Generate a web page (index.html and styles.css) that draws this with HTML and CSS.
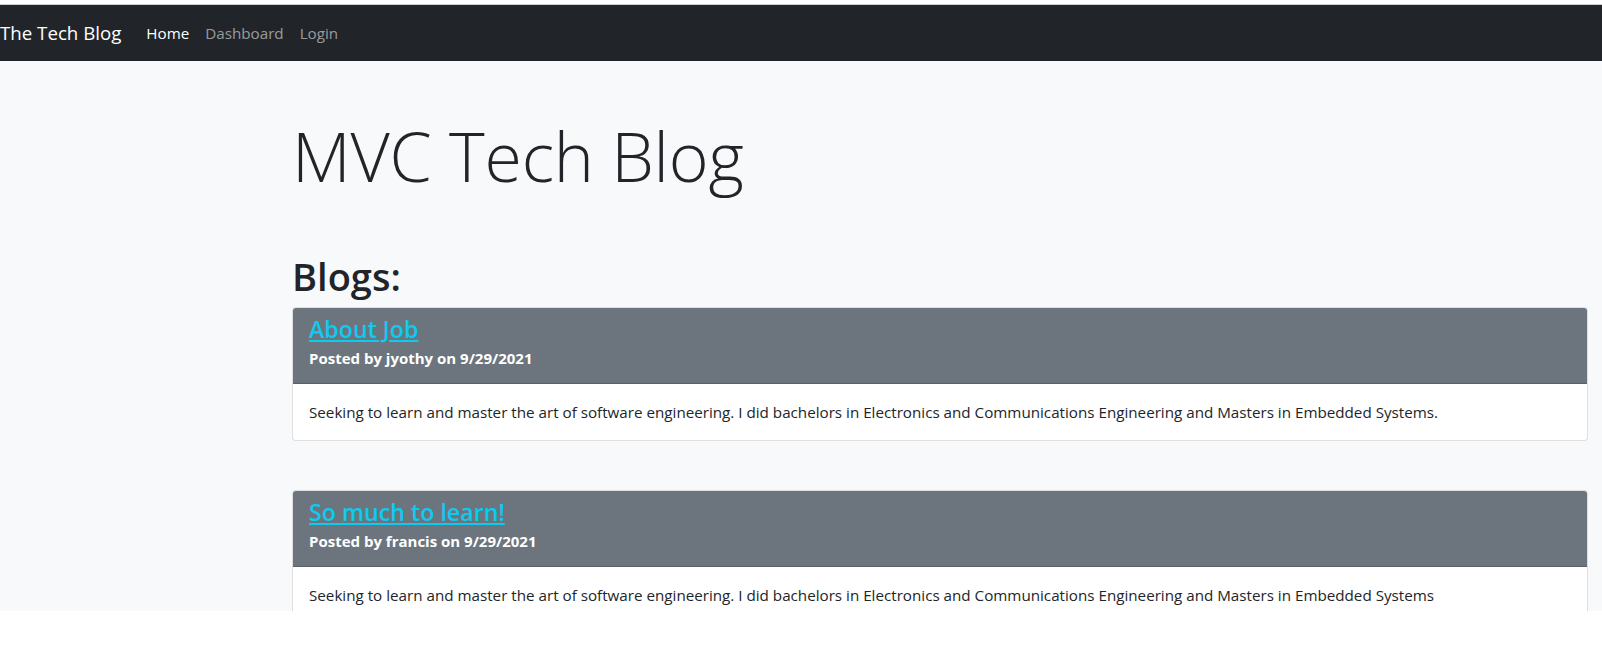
FILE: index.html
```html
<!DOCTYPE html>
<html lang="en">
<head>
<meta charset="utf-8">
<title>The Tech Blog</title>
<link rel="stylesheet" href="styles.css">
</head>
<body>
<div class="chrome"></div>
<div class="viewport">
  <nav class="navbar">
    <a class="brand" href="#">The Tech Blog</a>
    <ul class="nav">
      <li><a class="nav-link active" href="#">Home</a></li>
      <li><a class="nav-link" href="#">Dashboard</a></li>
      <li><a class="nav-link" href="#">Login</a></li>
    </ul>
  </nav>
  <main class="main">
    <h1 class="display">MVC Tech Blog</h1>
    <h2 class="blogs-title">Blogs:</h2>
    <article class="card">
      <header class="card-header">
        <h4 class="card-title"><a href="#">About Job</a></h4>
        <p class="card-meta">Posted by jyothy on 9/29/2021</p>
      </header>
      <div class="card-body">
        <p>Seeking to learn and master the art of software engineering. I did bachelors in Electronics and Communications Engineering and Masters in Embedded Systems.</p>
      </div>
    </article>
    <article class="card">
      <header class="card-header">
        <h4 class="card-title"><a href="#">So much to learn!</a></h4>
        <p class="card-meta">Posted by francis on 9/29/2021</p>
      </header>
      <div class="card-body">
        <p>Seeking to learn and master the art of software engineering. I did bachelors in Electronics and Communications Engineering and Masters in Embedded Systems</p>
      </div>
    </article>
  </main>
</div>
</body>
</html>
```

FILE: styles.css
```css
* { box-sizing: border-box; }

html, body {
  margin: 0;
  padding: 0;
  background: #ffffff;
}

body {
  font-family: "Open Sans", "Noto Sans", "Liberation Sans", sans-serif;
  font-size: 15.2px;
  line-height: 24px;
  color: #212529;
}

.chrome {
  height: 5px;
  background: #ffffff;
  border-bottom: 1px solid #d0d0d0;
}

.viewport {
  height: 606px;
  overflow: hidden;
  background: #f8f9fa;
}

.navbar {
  height: 56px;
  background: #212529;
  display: flex;
  align-items: center;
  padding: 8px 0;
}

.brand {
  font-size: 18.7px;
  line-height: 30px;
  padding: 5px 0;
  margin-right: 17px;
  color: #ffffff;
  text-decoration: none;
}

.nav {
  display: flex;
  list-style: none;
  margin: 0;
  padding: 0;
}

.nav-link {
  display: block;
  padding: 8px;
  font-size: 15.2px;
  color: rgba(255, 255, 255, 0.55);
  text-decoration: none;
}

.nav-link.active {
  color: #ffffff;
}

.main {
  padding: 0 14px 0 292px;
}

.display {
  margin: 54px 0 0;
  font-size: 68px;
  font-weight: 300;
  letter-spacing: -0.2px;
  line-height: 1.2;
}

.blogs-title {
  margin: 57px 0 8px;
  font-size: 38px;
  font-weight: 600;
  line-height: 1.2;
}

.card {
  background: #ffffff;
  border: 1px solid rgba(0, 0, 0, 0.125);
  border-radius: 4px;
  margin-bottom: 49px;
  overflow: hidden;
}

.card-header {
  background: #6c757d;
  padding: 8px 16px 13px;
  border-bottom: 1px solid rgba(0, 0, 0, 0.175);
}

.card-title {
  margin: 0 0 2px;
  font-size: 23.2px;
  font-weight: 600;
  line-height: 1.2;
}

.card-title a {
  color: #0dcaf0;
  text-decoration: underline;
}

.card-meta {
  margin: 0;
  font-size: 15px;
  color: #ffffff;
  font-weight: 700;
}

.card-body {
  padding: 16px;
}

.card-body p {
  margin: 0;
}
```
